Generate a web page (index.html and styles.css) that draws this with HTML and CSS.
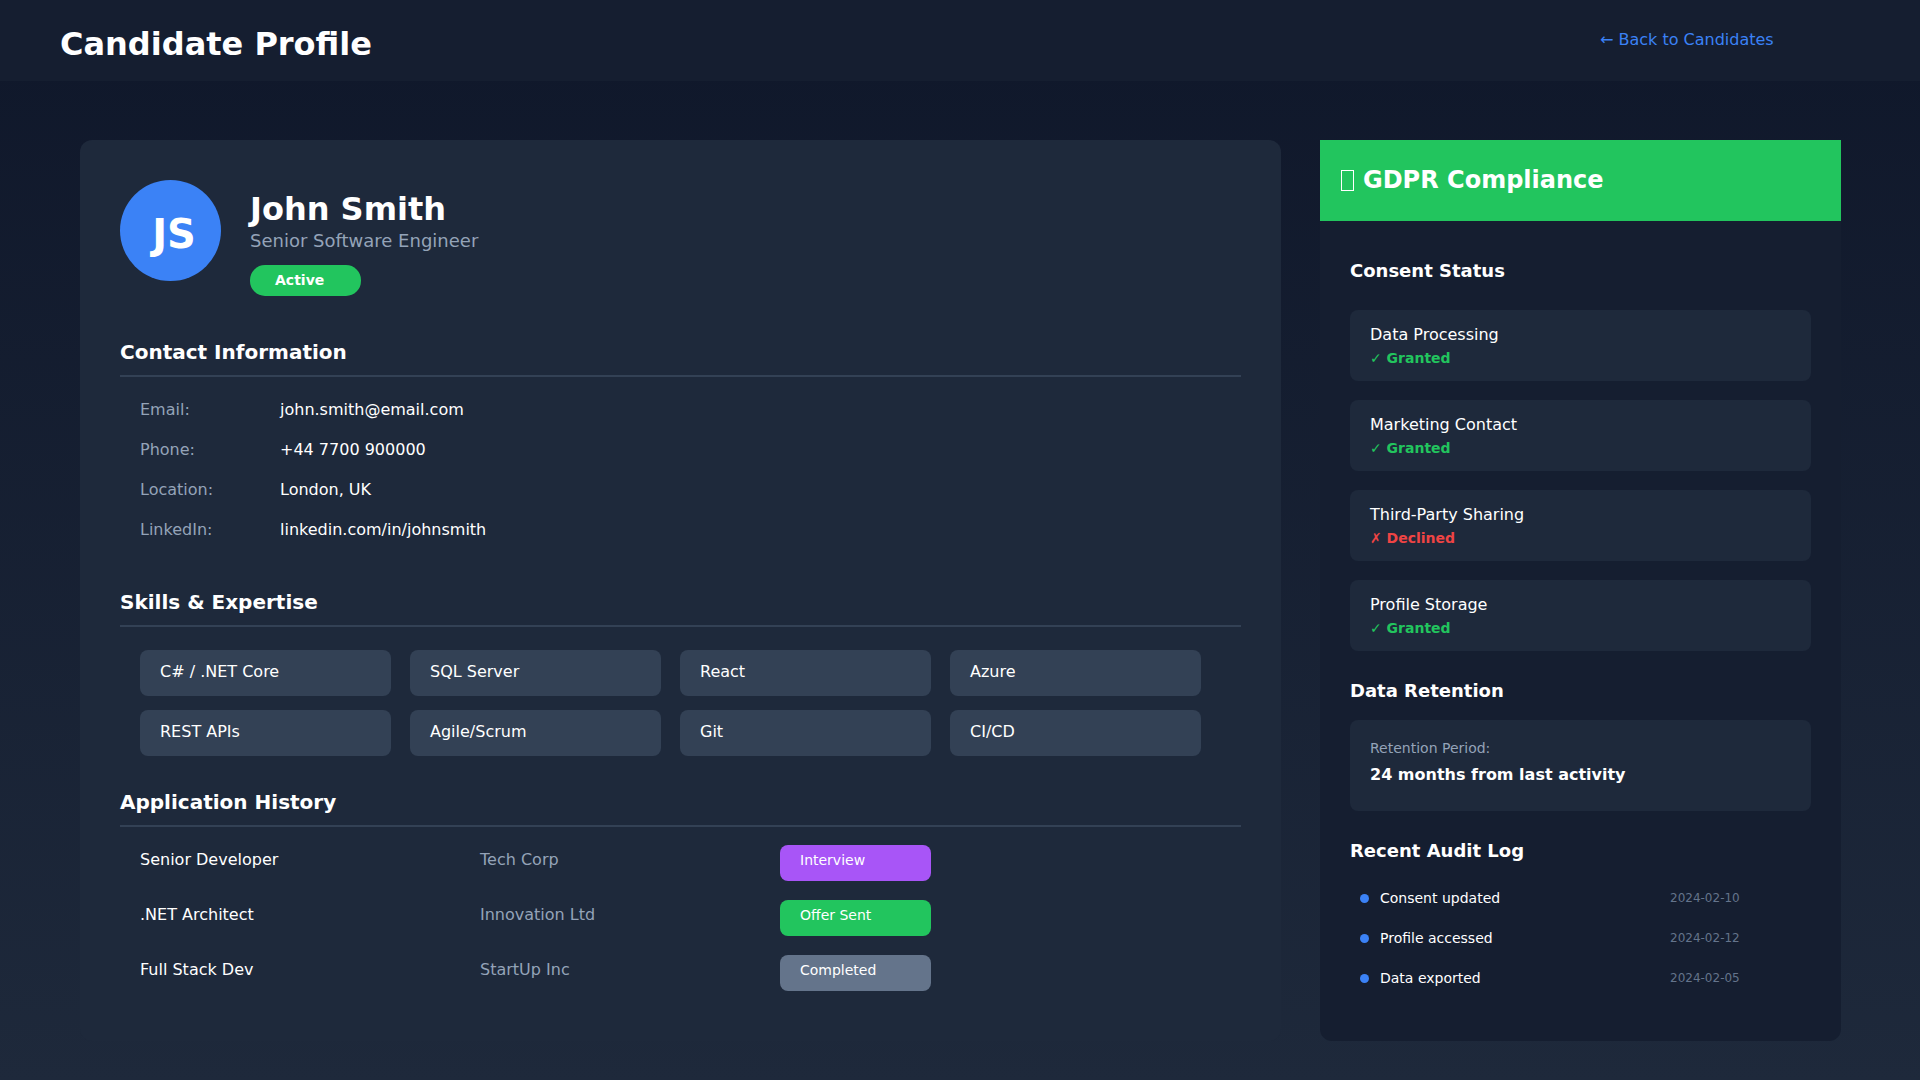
FILE: index.html
```html
<!DOCTYPE html>
<html lang="en">
<head>
    <meta charset="UTF-8">
    <meta name="viewport" content="width=device-width, initial-scale=1.0">
    <title>Candidate Profile</title>
    <link rel="stylesheet" href="styles.css">
</head>
<body>
    <header class="header">
        <h1>Candidate Profile</h1>
        <nav class="nav">
            <a href="#">← Back to Candidates</a>
        </nav>
    </header>

    <div class="container">
        <main class="profile">
            <div class="profile-header">
                <div class="avatar">JS</div>
                <div class="profile-info">
                    <h2>John Smith</h2>
                    <p>Senior Software Engineer</p>
                    <span class="badge">Active</span>
                </div>
            </div>

            <section class="section">
                <h3>Contact Information</h3>
                <dl class="contact">
                    <dt>Email:</dt>
                    <dd>john.smith@email.com</dd>
                    <dt>Phone:</dt>
                    <dd>+44 7700 900000</dd>
                    <dt>Location:</dt>
                    <dd>London, UK</dd>
                    <dt>LinkedIn:</dt>
                    <dd>linkedin.com/in/johnsmith</dd>
                </dl>
            </section>

            <section class="section">
                <h3>Skills &amp; Expertise</h3>
                <ul class="skills">
                    <li>C# / .NET Core</li>
                    <li>SQL Server</li>
                    <li>React</li>
                    <li>Azure</li>
                    <li>REST APIs</li>
                    <li>Agile/Scrum</li>
                    <li>Git</li>
                    <li>CI/CD</li>
                </ul>
            </section>

            <section class="section">
                <h3>Application History</h3>
                <table class="history">
                    <tr>
                        <td>Senior Developer</td>
                        <td class="company">Tech Corp</td>
                        <td><span class="status interview">Interview</span></td>
                    </tr>
                    <tr>
                        <td>.NET Architect</td>
                        <td class="company">Innovation Ltd</td>
                        <td><span class="status offer">Offer Sent</span></td>
                    </tr>
                    <tr>
                        <td>Full Stack Dev</td>
                        <td class="company">StartUp Inc</td>
                        <td><span class="status completed">Completed</span></td>
                    </tr>
                </table>
            </section>
        </main>

        <aside class="gdpr">
            <div class="gdpr-header">
                <span class="gdpr-icon"></span>
                <h2>GDPR Compliance</h2>
            </div>

            <div class="gdpr-content">
                <h3>Consent Status</h3>
                <div class="consents">
                    <div class="consent">
                        <p>Data Processing</p>
                        <p class="granted">✓ Granted</p>
                    </div>
                    <div class="consent">
                        <p>Marketing Contact</p>
                        <p class="granted">✓ Granted</p>
                    </div>
                    <div class="consent">
                        <p>Third-Party Sharing</p>
                        <p class="declined">✗ Declined</p>
                    </div>
                    <div class="consent">
                        <p>Profile Storage</p>
                        <p class="granted">✓ Granted</p>
                    </div>
                </div>

                <h3>Data Retention</h3>
                <div class="retention">
                    <p class="retention-label">Retention Period:</p>
                    <p class="retention-value">24 months from last activity</p>
                </div>

                <h3>Recent Audit Log</h3>
                <ul class="audit">
                    <li><span class="dot"></span><span>Consent updated</span><time>2024-02-10</time></li>
                    <li><span class="dot"></span><span>Profile accessed</span><time>2024-02-12</time></li>
                    <li><span class="dot"></span><span>Data exported</span><time>2024-02-05</time></li>
                </ul>
            </div>
        </aside>
    </div>
</body>
</html>
```
FILE: styles.css
```css
* {
    box-sizing: border-box;
    margin: 0;
    padding: 0;
}

body {
    background: linear-gradient(to bottom, #0f172a, #1e293b);
    color: #fff;
    font-family: "DejaVu Sans", sans-serif;
    font-size: 16px;
    line-height: 24px;
    min-height: 100vh;
}

ul {
    list-style: none;
}

.header {
    display: flex;
    justify-content: space-between;
    align-items: flex-start;
    padding: 20px 60px 13px;
    background-color: #151e30;
}

.header h1 {
    font-size: 32px;
    line-height: 48px;
}

.nav {
    width: 260px;
}

.nav a {
    color: #3b82f6;
    line-height: 40px;
    text-decoration: none;
}

.nav a:hover {
    text-decoration: underline;
}

.container {
    display: grid;
    grid-template-columns: 1fr 521px;
    gap: 39px;
    padding: 59px 79px 39px 80px;
}

/* Candidate */
.profile {
    padding: 40px 40px 31px;
    background-color: #1e293b;
    border-radius: 12px;
}

.profile-header {
    display: flex;
    gap: 29px;
    margin-bottom: 44px;
}

.avatar {
    width: 101px;
    height: 101px;
    padding-left: 7px;
    border-radius: 50%;
    background-color: #3b82f6;
    font-size: 40px;
    font-weight: bold;
    line-height: 108px;
    text-align: center;
}

.profile-info {
    padding-top: 9px;
}

.profile-info h2 {
    font-size: 32px;
    line-height: 40px;
}

.profile-info p {
    margin-bottom: 12px;
    color: #94a3b8;
    font-size: 18px;
}

.badge {
    display: block;
    width: 111px;
    padding: 0 25px;
    border-radius: 15px;
    background-color: #22c55e;
    font-size: 14px;
    font-weight: bold;
    line-height: 31px;
}

.section {
    margin-bottom: 34px;
}

.section:last-child {
    margin-bottom: 0;
}

.section h3 {
    padding-bottom: 11px;
    border-bottom: 2px solid #334155;
    font-size: 20px;
}

.contact {
    display: grid;
    grid-template-columns: 140px 1fr;
    padding: 13px 20px 6px;
    line-height: 40px;
}

.contact dt {
    color: #94a3b8;
}

.skills {
    display: grid;
    grid-template-columns: repeat(4, 1fr);
    gap: 14px 19px;
    padding: 23px 40px 0 20px;
}

.skills li {
    padding: 0 20px 2px;
    border-radius: 8px;
    background-color: #334155;
    line-height: 44px;
}

.history {
    width: 100%;
    margin-top: 18px;
    border-collapse: collapse;
    table-layout: fixed;
}

.history td {
    height: 55px;
    padding-left: 20px;
    line-height: 30px;
    vertical-align: top;
}

.history td:first-child {
    width: 340px;
}

.history .company {
    width: 300px;
    color: #94a3b8;
}

.status {
    display: block;
    width: 151px;
    padding: 0 20px 6px;
    border-radius: 8px;
    font-size: 14px;
}

.interview {
    background-color: #a855f7;
}

.offer {
    background-color: #22c55e;
}

.completed {
    background-color: #64748b;
}

/* GDPR */
.gdpr {
    background-color: #151e30;
    border-radius: 0 0 12px 12px;
}

.gdpr-header {
    display: flex;
    align-items: center;
    gap: 9px;
    height: 81px;
    padding: 0 21px;
    background-color: #22c55e;
}

.gdpr-header h2 {
    padding-bottom: 2px;
    font-size: 24px;
}

.gdpr-icon {
    width: 13px;
    height: 21px;
    border: 1px solid #fff;
}

.gdpr-content {
    padding: 38px 30px;
}

.gdpr-content h3 {
    font-size: 18px;
}

.consents {
    display: grid;
    gap: 19px;
    margin: 27px 0 28px;
}

.consent {
    padding: 13px 20px 11px;
    border-radius: 8px;
    background-color: #1e293b;
}

.consent .granted,
.consent .declined {
    color: #22c55e;
    font-size: 14px;
    font-weight: bold;
    line-height: 23px;
}

.consent .declined {
    color: #ef4444;
}

.retention {
    margin: 17px 0 28px;
    padding: 15px 20px 22px;
    border-radius: 8px;
    background-color: #1e293b;
}

.retention-label {
    color: #94a3b8;
    font-size: 14px;
    line-height: 26px;
}

.retention-value {
    font-weight: bold;
    line-height: 28px;
}

.audit {
    margin-top: 15px;
    padding-left: 10px;
}

.audit li {
    display: grid;
    grid-template-columns: 20px 1fr 141px;
    align-items: center;
    font-size: 14px;
    line-height: 40px;
}

.audit time {
    color: #64748b;
    font-size: 12px;
}

.dot {
    width: 9px;
    height: 9px;
    border-radius: 50%;
    background-color: #3b82f6;
}
```
